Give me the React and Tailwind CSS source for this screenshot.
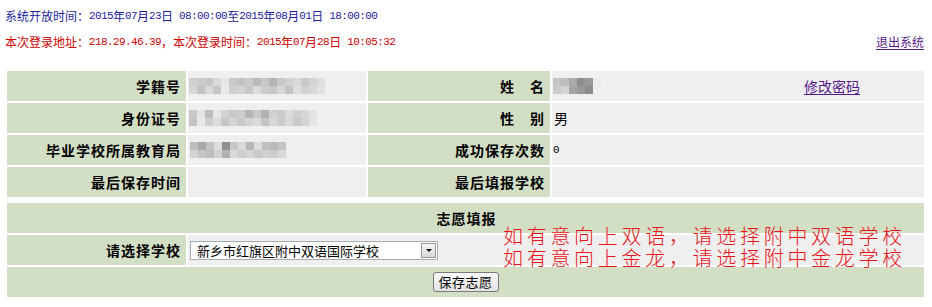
import React from "react";

const CJK = "font-['SimSun','Noto_Sans_CJK_SC',sans-serif]";

function M({ children }) {
  return (
    <span className="font-['Liberation_Mono',monospace] text-[11px] tracking-[-0.6px]">
      {children}
    </span>
  );
}

function Mosaic({ rows, size = 8 }) {
  return (
    <div className="flex flex-col">
      {rows.map((r, i) => (
        <div key={i} className="flex">
          {r.map((c, j) => (
            <div key={j} style={{ background: c, width: size, height: size }} />
          ))}
        </div>
      ))}
    </div>
  );
}

const m1 = [
  ["#cfcfcf","#c9c9c9","#c6c6c6","#dadada","#e6e6e6","#c9c9c9","#c2c2c2","#cbcbcb","#b9b9b9","#c6c6c6","#b3b3b3","#c8c8c8","#d1d1d1","#d9d9d9","#c9c9c9","#d4d4d4","#dddddd"],
  ["#d6d6d6","#c3c3c3","#d9d9d9","#c6c6c6","#e9e9e9","#cfcfcf","#d3d3d3","#c7c7c7","#dcdcdc","#cdcdcd","#c9c9c9","#d7d7d7","#c4c4c4","#dedede","#d2d2d2","#d8d8d8","#e2e2e2"],
];
const m2 = [
  ["#c9c9c9","#e4e4e4","#bdbdbd","#e6e6e6","#d3d3d3","#c8c8c8","#cdcdcd","#b5b5b5","#c9c9c9","#b2b2b2","#d1d1d1","#cbcbcb","#dbdbdb","#d0d0d0","#d8d8d8","#e3e3e3"],
  ["#c2c2c2","#e8e8e8","#cfcfcf","#dcdcdc","#c6c6c6","#d5d5d5","#c9c9c9","#d3d3d3","#dadada","#c4c4c4","#d7d7d7","#cccccc","#d9d9d9","#c8c8c8","#d2d2d2","#e4e4e4"],
];
const m3 = [
  ["#bdbdbd","#a9a9a9","#c4c4c4","#dcdcdc","#8f8f8f","#c8c8c8","#d9d9d9","#b7b7b7","#dcdcdc","#c0c0c0","#b9b9b9","#c6c6c6"],
  ["#d4d4d4","#c6c6c6","#bdbdbd","#d3d3d3","#b1b1b1","#d8d8d8","#cdcdcd","#d4d4d4","#c9c9c9","#d1d1d1","#cdcdcd","#d8d8d8"],
];
const mName = [
  ["#c5c5c5","#bcbcbc","#aaaaaa","#8e8e8e","#999999","#ececec"],
  ["#cbcbcb","#d6d6d6","#a3a3a3","#9a9a9a","#8c8c8c","#efefef"],
];

const GREEN = "bg-[#d3dfc5]";

function Label({ children, className = "" }) {
  return (
    <div className={`bg-[#d3dfc5] flex items-center justify-end pr-[5px] text-[14px] font-bold tracking-[1px] text-black ${className}`}>
      {children}
    </div>
  );
}

function Val({ children, className = "" }) {
  return (
    <div className={`bg-[#efefef] flex items-center pl-[1px] text-black ${className}`}>
      {children}
    </div>
  );
}

export default function App() {
  return (
    <div className={`w-[932px] h-[307px] bg-white ${CJK} text-[12px] overflow-hidden`}>
      <div className="h-[26px] mt-[3px] pl-[5px] flex items-center text-[#1c1c9c] leading-[12px]">
        <span>系统开放时间：</span>
        <M>2015</M>年<M>07</M>月<M>23</M>日<M>{"\u00a008:00:00"}</M>至<M>2015</M>年<M>08</M>月<M>01</M>日<M>{"\u00a018:00:00"}</M>
      </div>
      <div className="h-[26px] pl-[5px] pr-[8px] flex items-center text-[#cc0000] leading-[12px]">
        <span>本次登录地址：</span>
        <M>218.29.46.39</M>，本次登录时间：<M>2015</M>年<M>07</M>月<M>28</M>日<M>{"\u00a010:05:32"}</M>
        <a href="#" className="ml-auto text-[#551a8b] underline underline-offset-2">退出系统</a>
      </div>

      <div className="ml-[7px] mt-[16px] w-[917px] grid grid-cols-[179px_178px_182px_372px] auto-rows-[30px] gap-[2px]">
        <Label>学籍号</Label>
        <Val className="pl-[1px]"><Mosaic rows={m1} /></Val>
        <Label>姓　名</Label>
        <Val>
          <Mosaic rows={mName} />
          <a href="#" className="ml-[203px] text-[14px] text-[#551a8b] underline underline-offset-2">修改密码</a>
        </Val>

        <Label>身份证号</Label>
        <Val><Mosaic rows={m2} /></Val>
        <Label>性　别</Label>
        <Val className="text-[14px] pl-[2px]">男</Val>

        <Label>毕业学校所属教育局</Label>
        <Val className="pl-[2px]"><Mosaic rows={m3} /></Val>
        <Label>成功保存次数</Label>
        <Val className="pl-[1px]"><M>0</M></Val>

        <Label>最后保存时间</Label>
        <Val />
        <Label>最后填报学校</Label>
        <Val />
      </div>

      <div className="relative ml-[7px] mt-[6px] w-[917px] grid grid-cols-[179px_736px] auto-rows-[30px] gap-[2px]">
        <div className={`${GREEN} col-span-2 flex items-center justify-center text-[14px] font-bold tracking-[1px] pl-[2px]`}>
          志愿填报
        </div>
        <Label>请选择学校</Label>
        <div className="bg-[#efefef] flex items-center pl-[2px]">
          <div className="w-[248px] h-[19px] bg-white border border-[#a5acb2] flex items-center">
            <span className="pl-[6px] text-[13px] text-black leading-[17px] flex-1">新乡市红旗区附中双语国际学校</span>
            <div className="w-[15px] h-[15px] mr-[1px] border border-[#9a9a9a] bg-gradient-to-b from-[#f8f8f8] to-[#d8d8d8] flex items-center justify-center">
              <div className="w-0 h-0 border-l-[3px] border-r-[3px] border-t-[3px] border-l-transparent border-r-transparent border-t-black" />
            </div>
          </div>
        </div>
        <div className={`${GREEN} col-span-2 flex items-center justify-center`}>
          <button className="w-[66px] h-[20px] rounded-[3px] border border-[#7a7a7a] bg-gradient-to-b from-[#fafafa] to-[#e2e2e2] text-[13px] text-black leading-[18px] tracking-[0.5px]">
            保存志愿
          </button>
        </div>

        <div className="absolute left-[496px] top-[22px] text-[#e8141a] text-[20px] leading-[22px] tracking-[3.7px] font-['Noto_Sans_CJK_SC',sans-serif] font-light pointer-events-none whitespace-nowrap">
          <div>如有意向上双语，请选择附中双语学校</div>
          <div>如有意向上金龙，请选择附中金龙学校</div>
        </div>
      </div>
    </div>
  );
}
